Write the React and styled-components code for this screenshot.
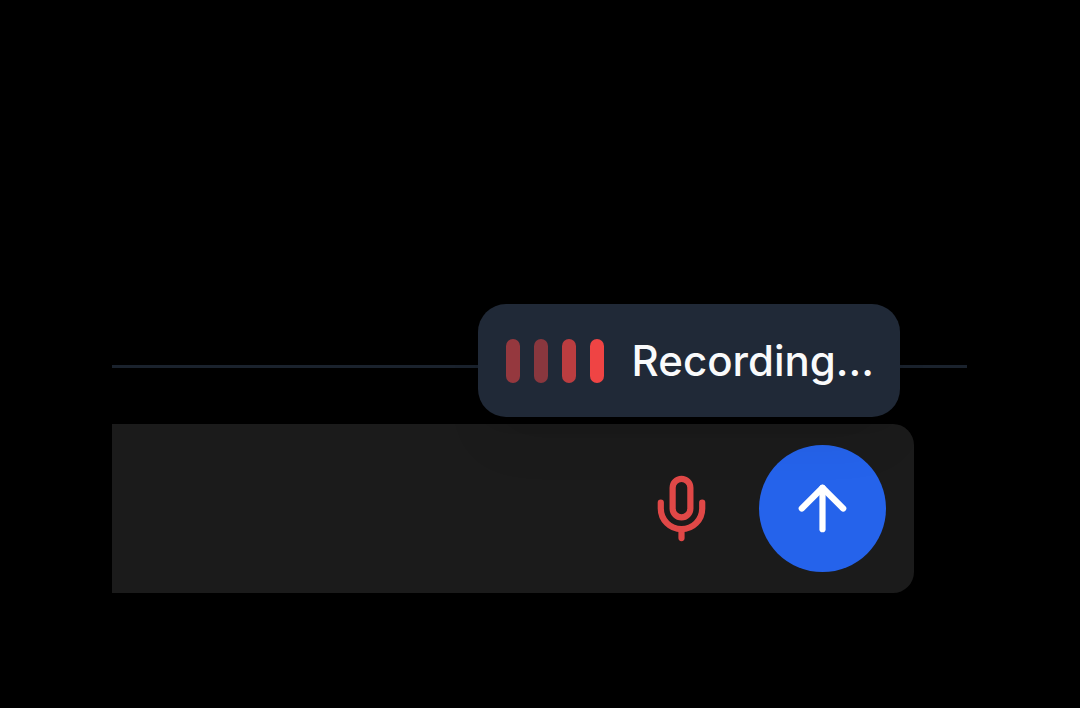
import React from "react";
import styled, { createGlobalStyle } from "styled-components";
import { ArrowUp, Mic } from "lucide-react";

const GlobalStyle = createGlobalStyle`
  *, *::before, *::after {
    box-sizing: border-box;
  }

  body {
    margin: 0;
    background: #000000;
    font-family: Inter, "Liberation Sans", sans-serif;
  }
`;

const Page = styled.main`
  padding: 365px 113px 112px 112px;
`;

const Footer = styled.footer`
  position: relative;
  border-top: 3px solid #1a222d;
  padding: 56px 53px 0 0;
`;

const Composer = styled.form`
  display: flex;
  align-items: center;
  gap: 14px;
  padding: 21px 28px 21px 0;
  border-radius: 0 21px 21px 0;
  background: #1b1b1b;
`;

const MessageInput = styled.input`
  flex: 1;
  min-width: 0;
  height: 84px;
  padding: 0 28px;
  border: 0;
  outline: 0;
  background: transparent;
  color: #ffffff;
  font: inherit;
  font-size: 42px;
`;

const RoundButton = styled.button`
  display: flex;
  flex: none;
  align-items: center;
  justify-content: center;
  width: 127px;
  height: 127px;
  padding: 0;
  border: 0;
  border-radius: 50%;
  background: ${(props) => props.$background};
  color: ${(props) => props.$color};
  cursor: pointer;
`;

const RecordingStatus = styled.div`
  position: absolute;
  top: -64px;
  right: 67px;
  display: flex;
  align-items: center;
  gap: 28px;
  height: 113px;
  padding: 0 26px 0 28px;
  border-radius: 28px;
  background: #202937;
  box-shadow: 0 35px 52px -14px rgba(0, 0, 0, 0.08),
    0 14px 21px -14px rgba(0, 0, 0, 0.08);
`;

const Levels = styled.div`
  display: flex;
  gap: 14px;
`;

const LevelBar = styled.span`
  width: 14px;
  height: 44px;
  border-radius: 7px;
  background: #ef4444;
  opacity: ${(props) => props.$opacity};
`;

const StatusText = styled.span`
  color: #f9fafb;
  font-size: 42px;
  font-weight: 500;
  line-height: 56px;
  white-space: nowrap;
`;

const levels = [0.57, 0.51, 0.75, 1];

export default function App() {
  return (
    <>
      <GlobalStyle />
      <Page>
        <Footer>
          <Composer onSubmit={(event) => event.preventDefault()}>
            <MessageInput type="text" aria-label="Message" />
            <RoundButton
              type="button"
              aria-label="Stop recording"
              $background="transparent"
              $color="#e04847"
            >
              <Mic size={71} strokeWidth={2.1} />
            </RoundButton>
            <RoundButton
              type="submit"
              aria-label="Send message"
              $background="#2563eb"
              $color="#ffffff"
            >
              <ArrowUp size={71} strokeWidth={2.1} />
            </RoundButton>
          </Composer>
          <RecordingStatus role="status">
            <Levels aria-hidden="true">
              {levels.map((level, index) => (
                <LevelBar key={index} $opacity={level} />
              ))}
            </Levels>
            <StatusText>Recording...</StatusText>
          </RecordingStatus>
        </Footer>
      </Page>
    </>
  );
}
